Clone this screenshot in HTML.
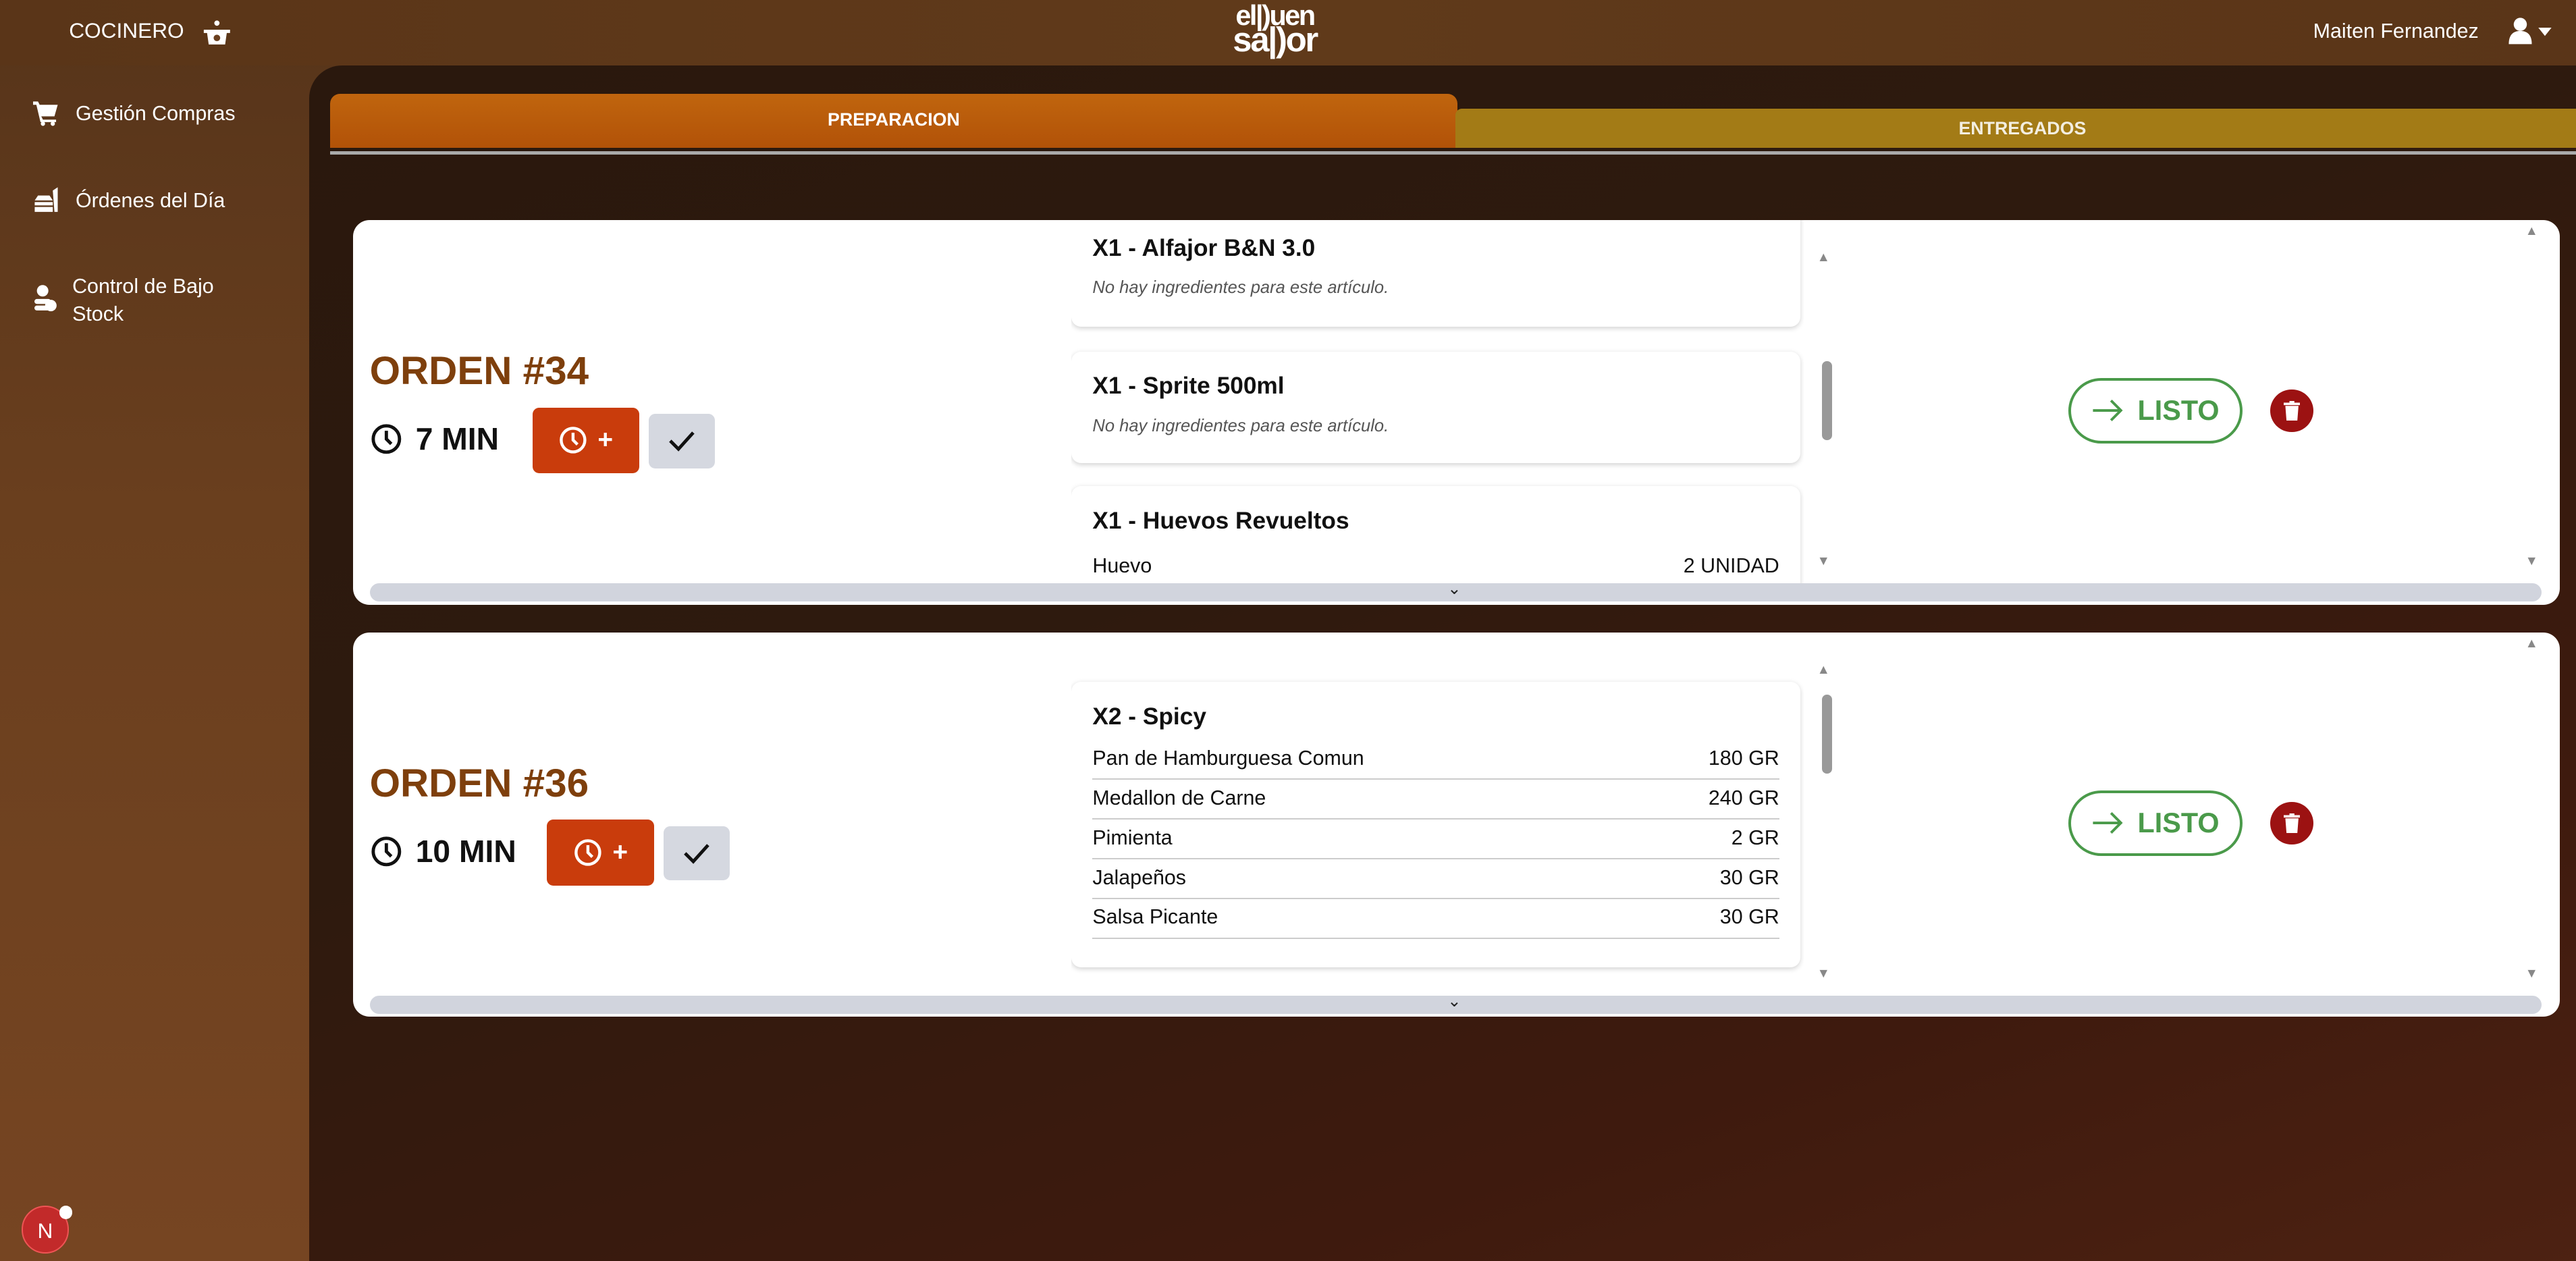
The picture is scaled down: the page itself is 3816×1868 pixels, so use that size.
<!DOCTYPE html>
<html><head><meta charset="utf-8"><style>
*{margin:0;padding:0;box-sizing:border-box}
html,body{width:3816px;height:1868px;overflow:hidden;background:#5a3518}
#z{zoom:2.4337;width:1568px;height:768px;position:relative;font-family:"Liberation Sans",sans-serif;background:linear-gradient(180deg,#56341a 0,#6a3f1e 40%,#764522 100%);overflow:hidden}
.hdr{position:absolute;left:0;top:0;width:1568px;height:40px;background:linear-gradient(90deg,#5a3518,#603a1a 50%,#5a3518)}
.main{position:absolute;left:188px;top:40px;width:1400px;height:740px;border-radius:20px 0 0 0;background:linear-gradient(160deg,#2a180d 0%,#2e1a0e 40%,#3e1a0e 75%,#4e2212 100%)}
.t{position:absolute;color:#fff}
.tab1{position:absolute;left:201px;top:57px;width:686px;height:33px;background:linear-gradient(180deg,#c0650e,#b25208);border-radius:6px 6px 0 0;color:#fff;font-weight:bold;font-size:11px;text-align:center;line-height:32px}
.tab2{position:absolute;left:886px;top:66px;width:690px;height:24px;background:#a37b16;color:#f3eee0;font-weight:bold;font-size:11px;text-align:center;line-height:24px;border-radius:4px 0 0 0}
.line{position:absolute;left:201px;top:92px;width:1367px;height:2px;background:#aaa}
.card{position:absolute;left:215px;width:1343px;height:234px;background:#fff;border-radius:10px;overflow:hidden}
.hs{position:absolute;left:10px;top:221px;width:1322px;height:11px;background:#d1d4dd;border-radius:6px}
.hs span{position:absolute;left:656px;top:-3px;font-size:10px;color:#222}
.ord{position:absolute;left:10px;font-weight:bold;font-size:24px;color:#7e3f0c}
.min{position:absolute;left:10px;font-weight:bold;font-size:19px;color:#111;display:flex;align-items:center;gap:8px}
.bt{position:absolute;background:#c93c0c;border-radius:4px;display:flex;align-items:center;justify-content:center;gap:6px;color:#fff;font-weight:bold;font-size:16px}
.ck{position:absolute;background:#d5d8e0;border-radius:4px;display:flex;align-items:center;justify-content:center}
.list{position:absolute;left:437px;top:0;width:446px;height:221px;overflow:hidden}
.it{position:absolute;left:0;width:444px;background:#fff;border-radius:6px;box-shadow:0 1px 3px rgba(0,0,0,.18);padding:0 13px}
.it h4{font-size:14.5px;font-weight:bold;color:#111;margin-top:12px}
.it i{display:block;font-size:10.5px;color:#555;margin-top:10px}
.row{display:flex;justify-content:space-between;font-size:12.5px;color:#111;border-bottom:1px solid #ccc;padding:4px 0 5px}
.vs{position:absolute;left:891px;font-size:8px;color:#888}
.th{position:absolute;left:894px;width:6px;height:48px;background:#999;border-radius:3px}
.listo{position:absolute;left:1044px;width:106px;height:40px;border:2px solid #4a9a4a;border-radius:20px;display:flex;align-items:center;justify-content:center;gap:8px;color:#4a9a4a;font-weight:bold;font-size:17px}
.tr{position:absolute;left:1167px;width:26px;height:26px;border-radius:50%;background:#9c1212;display:flex;align-items:center;justify-content:center}
</style></head><body><div id="z">
<div class="hdr"></div>
<div class="main"></div>
<div class="t" style="left:42px;top:11px;font-size:13px">COCINERO</div>
<svg style="position:absolute;left:122px;top:11px" width="20" height="17" viewBox="0 0 20 17"><circle cx="10" cy="3" r="1.6" fill="#fff"/><path d="M2 7h16v2H2zM4 9h12l-1 7H5z" fill="#fff"/><circle cx="10" cy="12" r="2" fill="#6a3f1e"/></svg>
<div class="t" style="left:737px;top:2px;font-weight:bold;font-size:17px;line-height:15px;letter-spacing:-1px;text-align:center;width:78px">el|)uen<br><span style="font-size:21px">sa|)or</span></div>
<div class="t" style="left:1408px;top:12px;font-size:12.5px">Maiten Fernandez</div>
<svg style="position:absolute;left:1526px;top:10px" width="30" height="18" viewBox="0 0 30 18"><circle cx="8" cy="5" r="4" fill="#fff"/><path d="M1 17c0-6 3-8 7-8s7 2 7 8z" fill="#fff"/><path d="M19 7h8l-4 5z" fill="#fff"/></svg>
<svg style="position:absolute;left:20px;top:61px" width="16" height="16" viewBox="0 0 16 16"><path d="M0 1h3l1 2h11l-2 7H5l1 2h8v1.5H4.5L2 3H0z" fill="#fff"/><circle cx="6" cy="14.5" r="1.3" fill="#fff"/><circle cx="12" cy="14.5" r="1.3" fill="#fff"/></svg>
<div class="t" style="left:46px;top:62px;font-size:12.5px">Gestión Compras</div>
<svg style="position:absolute;left:20px;top:113px" width="16" height="17" viewBox="0 0 16 17"><path d="M1 10h11v2H1zM1 13h11v3H1zM3 6h7l2 3H1zM12 3l3-2v15h-2z" fill="#fff"/></svg>
<div class="t" style="left:46px;top:115px;font-size:12.5px">Órdenes del Día</div>
<svg style="position:absolute;left:21px;top:173px" width="14" height="18" viewBox="0 0 14 18"><circle cx="5" cy="4" r="3.5" fill="#fff"/><rect x="0" y="9" width="10" height="3" rx="1.5" fill="#fff"/><rect x="0" y="13" width="10" height="3" rx="1.5" fill="#fff"/><circle cx="10" cy="13" r="3.5" fill="#fff"/></svg>
<div class="t" style="left:44px;top:166px;font-size:12.5px;line-height:17px">Control de Bajo<br>Stock</div>
<div style="position:absolute;left:13px;top:734px;width:29px;height:29px;border-radius:50%;background:#c22a2a;color:#fff;font-size:13px;text-align:center;line-height:29px;border:1px solid #e55">N</div>
<div style="position:absolute;left:36px;top:734px;width:8px;height:8px;border-radius:50%;background:#fff"></div>

<div class="tab1">PREPARACION</div>
<div class="tab2">ENTREGADOS</div>
<div class="line"></div>

<div class="card" style="top:134px">
 <div class="ord" style="top:78px">ORDEN #34</div>
 <div class="min" style="top:122px"><svg width="20" height="20" viewBox="0 0 20 20"><circle cx="10" cy="10" r="8" fill="none" stroke="#111" stroke-width="2"/><path d="M10 5v5l3 3" stroke="#111" stroke-width="2" fill="none"/></svg>7 MIN</div>
 <div class="bt" style="left:109px;top:114px;width:65px;height:40px"><svg width="18" height="18" viewBox="0 0 20 20"><circle cx="10" cy="10" r="8" fill="none" stroke="#fff" stroke-width="2"/><path d="M10 5v5l3 3" stroke="#fff" stroke-width="2" fill="none"/></svg>+</div>
 <div class="ck" style="left:180px;top:118px;width:40px;height:33px"><svg width="18" height="14" viewBox="0 0 18 14"><path d="M2 7l5 5 9-10" stroke="#111" stroke-width="2" fill="none"/></svg></div>
 <div class="list">
  <div class="it" style="top:-20px;height:85px"><h4 style="margin-top:29px">X1 - Alfajor B&amp;N 3.0</h4><i>No hay ingredientes para este artículo.</i></div>
  <div class="it" style="top:80px;height:68px"><h4 style="margin-top:13px">X1 - Sprite 500ml</h4><i>No hay ingredientes para este artículo.</i></div>
  <div class="it" style="top:162px;height:80px"><h4 style="margin-top:13px">X1 - Huevos Revueltos</h4><div class="row" style="border:0;margin-top:8px"><span>Huevo</span><span>2 UNIDAD</span></div></div>
 </div>
 <div class="vs" style="top:18px">▲</div><div class="th" style="top:86px"></div><div class="vs" style="top:203px">▼</div>
 <div class="vs" style="left:1322px;top:2px">▲</div><div class="vs" style="left:1322px;top:203px">▼</div>
 <div class="listo" style="top:96px"><svg width="20" height="14" viewBox="0 0 20 14"><path d="M1 7h17M12 1l6 6-6 6" stroke="#4a9a4a" stroke-width="1.6" fill="none"/></svg>LISTO</div>
 <div class="tr" style="top:103px"><svg width="10" height="12" viewBox="0 0 10 12"><path d="M0 1h10v1.5H0zM3.5 0h3v1h-3zM1 3h8l-.7 9H1.7z" fill="#fff"/></svg></div>
 <div class="hs"><span>⌄</span></div>
</div>

<div class="card" style="top:385px">
 <div class="ord" style="top:78px">ORDEN #36</div>
 <div class="min" style="top:122px"><svg width="20" height="20" viewBox="0 0 20 20"><circle cx="10" cy="10" r="8" fill="none" stroke="#111" stroke-width="2"/><path d="M10 5v5l3 3" stroke="#111" stroke-width="2" fill="none"/></svg>10 MIN</div>
 <div class="bt" style="left:118px;top:114px;width:65px;height:40px"><svg width="18" height="18" viewBox="0 0 20 20"><circle cx="10" cy="10" r="8" fill="none" stroke="#fff" stroke-width="2"/><path d="M10 5v5l3 3" stroke="#fff" stroke-width="2" fill="none"/></svg>+</div>
 <div class="ck" style="left:189px;top:118px;width:40px;height:33px"><svg width="18" height="14" viewBox="0 0 18 14"><path d="M2 7l5 5 9-10" stroke="#111" stroke-width="2" fill="none"/></svg></div>
 <div class="list">
  <div class="it" style="top:30px;height:174px"><h4 style="margin-top:13px;margin-bottom:6px">X2 - Spicy</h4>
   <div class="row"><span>Pan de Hamburguesa Comun</span><span>180 GR</span></div>
   <div class="row"><span>Medallon de Carne</span><span>240 GR</span></div>
   <div class="row"><span>Pimienta</span><span>2 GR</span></div>
   <div class="row"><span>Jalapeños</span><span>30 GR</span></div>
   <div class="row"><span>Salsa Picante</span><span>30 GR</span></div>
  </div>
 </div>
 <div class="vs" style="top:18px">▲</div><div class="th" style="top:38px"></div><div class="vs" style="top:203px">▼</div>
 <div class="vs" style="left:1322px;top:2px">▲</div><div class="vs" style="left:1322px;top:203px">▼</div>
 <div class="listo" style="top:96px"><svg width="20" height="14" viewBox="0 0 20 14"><path d="M1 7h17M12 1l6 6-6 6" stroke="#4a9a4a" stroke-width="1.6" fill="none"/></svg>LISTO</div>
 <div class="tr" style="top:103px"><svg width="10" height="12" viewBox="0 0 10 12"><path d="M0 1h10v1.5H0zM3.5 0h3v1h-3zM1 3h8l-.7 9H1.7z" fill="#fff"/></svg></div>
 <div class="hs"><span>⌄</span></div>
</div>
</div></body></html>
